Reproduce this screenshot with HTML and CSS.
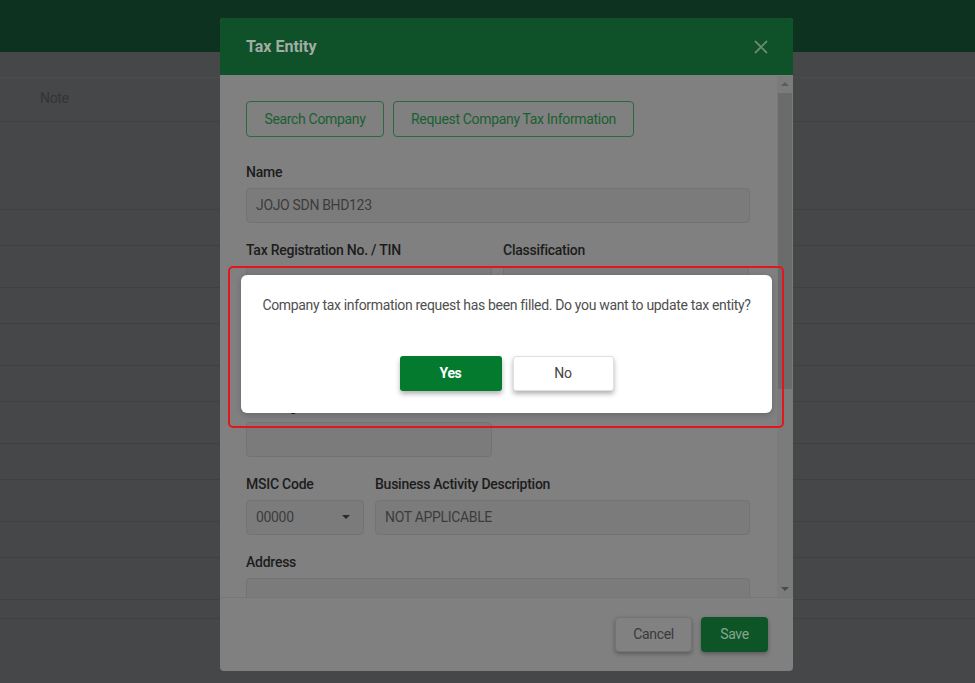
FILE: index.html
```html
<!DOCTYPE html>
<html lang="en">
<head>
<meta charset="utf-8">
<title>Tax Entity</title>
<link rel="stylesheet" href="styles.css">
</head>
<body>
<div class="page">
  <header class="topbar"></header>
  <div class="table">
    <div class="trow h26"></div>
    <div class="trow h44 thead"><span class="th">Note</span></div>
    <div class="trow h88"></div>
    <div class="trow h36"></div>
    <div class="trow h42"></div>
    <div class="trow h36"></div>
    <div class="trow h42"></div>
    <div class="trow h36"></div>
    <div class="trow h42"></div>
    <div class="trow h36"></div>
    <div class="trow h42"></div>
    <div class="trow h36"></div>
    <div class="trow h42"></div>
    <div class="trow h19"></div>
  </div>
</div>

<div class="modal">
  <div class="modal-header">
    <h2 class="modal-title">Tax Entity</h2>
    <button class="close" aria-label="Close">
      <svg width="14" height="14" viewBox="0 0 14 14"><path d="M1 1L13 13M13 1L1 13" stroke="currentColor" stroke-width="1.8" fill="none"/></svg>
    </button>
  </div>
  <div class="modal-body">
    <div class="form">
      <div class="actions">
        <button class="btn-outline">Search Company</button>
        <button class="btn-outline">Request Company Tax Information</button>
      </div>
      <div class="field">
        <label class="label">Name</label>
        <div class="input">JOJO SDN BHD123</div>
      </div>
      <div class="cols">
        <div class="field half">
          <label class="label">Tax Registration No. / TIN</label>
          <div class="input"></div>
        </div>
        <div class="field half">
          <label class="label">Classification</label>
          <div class="input"></div>
        </div>
      </div>
      <div class="cols">
        <div class="field half">
          <label class="label">ID Type</label>
          <div class="input"></div>
        </div>
        <div class="field half">
          <label class="label">ID No.</label>
          <div class="input"></div>
        </div>
      </div>
      <div class="cols">
        <div class="field half">
          <label class="label">SST Registration No.</label>
          <div class="input"></div>
        </div>
      </div>
      <div class="cols">
        <div class="field msic">
          <label class="label">MSIC Code</label>
          <div class="input select">00000<span class="caret"></span></div>
        </div>
        <div class="field grow">
          <label class="label">Business Activity Description</label>
          <div class="input">NOT APPLICABLE</div>
        </div>
      </div>
      <div class="field">
        <label class="label">Address</label>
        <div class="input tall"></div>
      </div>
    </div>
    <div class="scrollbar">
      <span class="sb-btn"><span class="tri up"></span></span>
      <div class="sb-track"><div class="sb-thumb"></div></div>
      <span class="sb-btn"><span class="tri down"></span></span>
    </div>
  </div>
  <div class="modal-footer">
    <button class="btn-cancel">Cancel</button>
    <button class="btn-save">Save</button>
  </div>
</div>

<div class="highlight"></div>
<div class="confirm">
  <p class="confirm-text">Company tax information request has been filled. Do you want to update tax entity?</p>
  <div class="confirm-actions">
    <button class="btn-yes">Yes</button>
    <button class="btn-no">No</button>
  </div>
</div>
</body>
</html>
```

FILE: styles.css
```css
* { box-sizing: border-box; }
html, body { margin: 0; padding: 0; }
body {
  width: 975px;
  height: 683px;
  overflow: hidden;
  background: #464749;
  font-family: Roboto, "Liberation Sans", Arial, sans-serif;
  font-size: 14px;
  letter-spacing: -0.33px;
}
button { font-family: inherit; font-size: 14px; letter-spacing: -0.33px; cursor: pointer; }

/* background page */
.topbar { height: 52px; background: #0d3220; }
.table { display: flex; flex-direction: column; }
.trow { border-bottom: 1px solid #3f4042; }
.h19 { height: 19px; }
.h26 { height: 26px; border-bottom-color: #4b4c4e; }
.h36 { height: 36px; }
.h42 { height: 42px; }
.h44 { height: 44px; }
.h88 { height: 88px; }
.thead { display: flex; align-items: center; padding: 0 0 3px 40px; }
.th { color: #333437; }

/* modal */
.modal {
  position: absolute;
  left: 220px;
  top: 18px;
  width: 573px;
  height: 653px;
  background: #808080;
  border-radius: 4px;
  overflow: hidden;
  display: flex;
  flex-direction: column;
}
.modal-header {
  height: 57px;
  flex: none;
  background: #0f5128;
  display: flex;
  align-items: center;
  justify-content: space-between;
  padding: 0 25px 0 26px;
}
.modal-title {
  margin: 0;
  font-size: 16px;
  font-weight: 700;
  letter-spacing: 0;
  color: #a2aca5;
}
.close {
  border: 0;
  background: none;
  padding: 0;
  color: #6a8a73;
  display: flex;
}
.modal-body {
  flex: 1;
  display: flex;
  min-height: 0;
  padding-top: 1px;
}
.form {
  flex: 1;
  overflow: hidden;
  padding: 25px 27px 0 26px;
}
.actions { display: flex; gap: 9px; margin-bottom: 25px; }
.btn-outline {
  height: 36px;
  padding: 0 0 1px;
  border: 1px solid #2a6b3e;
  border-radius: 4px;
  background: transparent;
  color: #1a5f31;
}
.actions .btn-outline:first-child { width: 138px; }
.actions .btn-outline:last-child { width: 241px; }
.field { margin-bottom: 17px; }
.label {
  display: block;
  line-height: 20px;
  height: 20px;
  margin-bottom: 6px;
  font-weight: 500;
  letter-spacing: -0.25px;
  color: #1c1c1c;
  padding-bottom: 1px;
}
.input {
  height: 35px;
  border: 1px solid #737373;
  border-radius: 4px;
  background: #7b7b7b;
  padding: 0 9px 1px;
  display: flex;
  align-items: center;
  color: #3b3b3b;
}
.input.tall { height: 60px; }
.cols { display: flex; gap: 11px; }
.half { width: 246px; flex: none; }
.msic { width: 118px; flex: none; }
.grow { flex: 1; }
.select { justify-content: space-between; padding-right: 13px; }
.caret {
  width: 0; height: 0;
  border-left: 4px solid transparent;
  border-right: 4px solid transparent;
  border-top: 4px solid #2b2b2b;
}

.scrollbar {
  width: 16px;
  flex: none;
  background: #7b7b7b;
  display: flex;
  flex-direction: column;
}
.sb-btn { height: 16px; display: flex; align-items: center; justify-content: center; flex: none; }
.tri { width: 0; height: 0; border-left: 4px solid transparent; border-right: 4px solid transparent; }
.tri.up { border-bottom: 4px solid #5b5b5b; }
.tri.down { border-top: 4px solid #4a4a4a; }
.sb-track { flex: 1; padding: 1px 1px 0 1px; }
.sb-thumb { height: 296px; background: #6b6b6b; }

.modal-footer {
  height: 74px;
  flex: none;
  border-top: 1px solid #777777;
  display: flex;
  justify-content: flex-end;
  gap: 9px;
  padding: 19px 25px 0 0;
}
.btn-cancel {
  height: 35px;
  width: 77px;
  padding: 0 0 2px;
  border: 1px solid #747474;
  border-radius: 4px;
  background: #818181;
  color: #3a3a3a;
  box-shadow: 0 2px 4px rgba(0,0,0,0.3);
}
.btn-save {
  height: 35px;
  width: 67px;
  padding: 0 0 2px;
  border: 0;
  border-radius: 4px;
  background: #0d5527;
  color: #86a590;
  box-shadow: 0 2px 4px rgba(0,0,0,0.3);
}

/* confirm dialog */
.highlight {
  position: absolute;
  left: 228px;
  top: 266px;
  width: 556px;
  height: 162px;
  border: 2px solid #e3161e;
  border-radius: 5px;
}
.confirm {
  position: absolute;
  left: 241px;
  top: 275px;
  width: 531px;
  height: 138px;
  background: #ffffff;
  border-radius: 6px;
  box-shadow: 0 2px 6px rgba(0,0,0,0.2);
  padding-top: 20px;
  text-align: center;
}
.confirm-text {
  margin: 0;
  line-height: 20px;
  color: #4f4f4f;
}
.confirm-actions {
  display: flex;
  justify-content: center;
  gap: 11px;
  margin-top: 41px;
}
.btn-yes {
  width: 102px;
  height: 35px;
  padding: 0 0 1px;
  border: 0;
  border-radius: 3px;
  background: #037a2d;
  color: #ffffff;
  font-weight: 700;
  box-shadow: 0 3px 5px rgba(0,0,0,0.3);
}
.btn-no {
  width: 101px;
  height: 35px;
  padding: 0 0 1px;
  border: 1px solid #e0e0e0;
  border-radius: 3px;
  background: #ffffff;
  color: #444444;
  box-shadow: 0 3px 5px rgba(0,0,0,0.3);
}
```
